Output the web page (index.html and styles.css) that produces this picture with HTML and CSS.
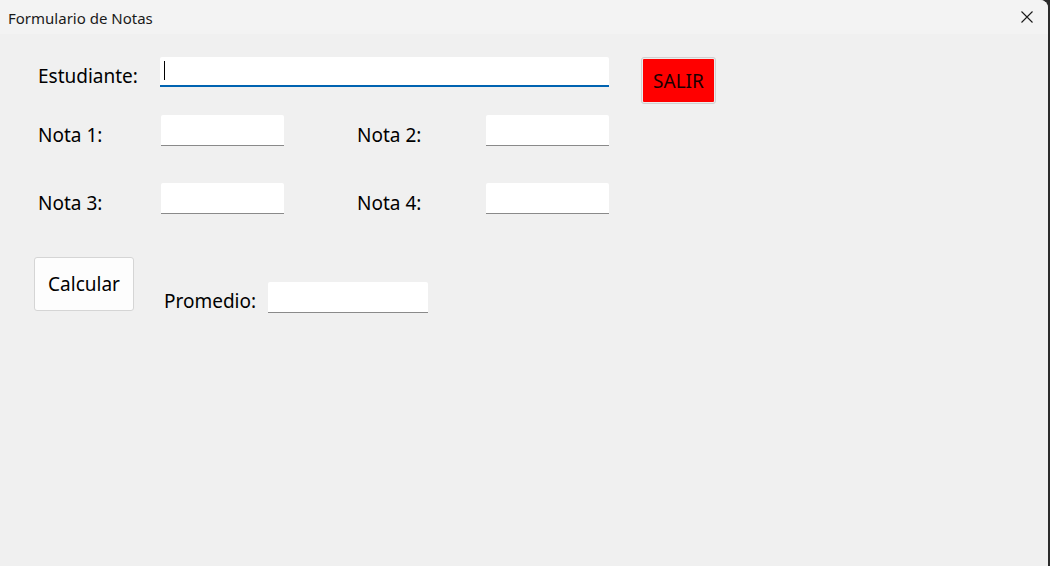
FILE: index.html
```html
<!DOCTYPE html>
<html lang="es">
<head>
<meta charset="utf-8">
<title>Formulario de Notas</title>
<link rel="stylesheet" href="styles.css">
</head>
<body>
<div class="window">
  <div class="titlebar">
    <span class="title">Formulario de Notas</span>
    <svg class="close" width="12" height="12" viewBox="0 0 12 12"><path d="M0.5 0.5 L11.5 11.5 M11.5 0.5 L0.5 11.5" stroke="#1a1a1a" stroke-width="1.1" fill="none"/></svg>
  </div>
  <div class="content">
    <div class="row row-student">
      <label class="lbl lbl-student">Estudiante:</label>
      <div class="field field-student"><span class="caret"></span></div>
      <button class="btn-salir">SALIR</button>
    </div>
    <div class="row row-notes">
      <label class="lbl lbl-nota">Nota 1:</label>
      <div class="field field-small"></div>
      <label class="lbl lbl-nota2">Nota 2:</label>
      <div class="field field-small"></div>
    </div>
    <div class="row row-notes row-notes2">
      <label class="lbl lbl-nota">Nota 3:</label>
      <div class="field field-small"></div>
      <label class="lbl lbl-nota2">Nota 4:</label>
      <div class="field field-small"></div>
    </div>
    <div class="row row-calc">
      <button class="btn-calc">Calcular</button>
      <label class="lbl lbl-prom">Promedio:</label>
      <div class="field field-prom"></div>
    </div>
  </div>
</div>
</body>
</html>
```

FILE: styles.css
```css
* { box-sizing: border-box; }
html, body { margin: 0; padding: 0; }
body {
  width: 1050px;
  height: 566px;
  background: #2b2b2b;
  overflow: hidden;
  font-family: "Noto Sans", "Open Sans", sans-serif;
  color: #000;
}
.window {
  width: 1048px;
  height: 566px;
  background: #f0f0f0;
  border-top-right-radius: 8px;
  overflow: hidden;
}
.titlebar {
  height: 34px;
  background: #f3f3f3;
  display: flex;
  align-items: center;
  justify-content: space-between;
  padding: 0 15px 0 8px;
}
.title {
  font-size: 15px;
  color: #1a1a1a;
  margin-top: 1px;
}
.close { margin-top: 0; }
.content {
  padding-top: 23px;
}
.row {
  display: flex;
  align-items: flex-start;
}
.lbl {
  font-size: 19px;
  line-height: 30px;
  white-space: nowrap;
}
.field {
  background: #fff;
  height: 31px;
  border-bottom: 1px solid #8a8a8a;
  border-radius: 2px 2px 0 0;
}
.row-student { padding-left: 38px; height: 58px; }
.lbl-student { width: 122px; margin-top: 4px; }
.field-student {
  width: 449px;
  height: 30px;
  border-bottom: 2px solid #0063b1;
  position: relative;
}
.caret {
  position: absolute;
  left: 4px;
  top: 4px;
  width: 1px;
  height: 19px;
  background: #000;
}
.btn-salir {
  margin-left: 32px;
  width: 75px;
  height: 47px;
  background: #ff0000;
  border: 2px solid #ececec;
  outline: 1px solid #d0d0d0;
  outline-offset: -1px;
  border-radius: 3px;
  font-family: inherit;
  font-size: 19px;
  color: #1a0000;
  padding: 0;
}
.row-notes { padding-left: 38px; height: 68px; }
.lbl-nota { width: 123px; margin-top: 5px; }
.field-small { width: 123px; }
.lbl-nota2 { width: 129px; margin-left: 73px; margin-top: 5px; }
.row-notes2 { height: 74px; }
.row-calc { padding-left: 34px; }
.btn-calc {
  width: 100px;
  height: 54px;
  background: #fdfdfd;
  border: 1px solid #d5d5d5;
  border-radius: 3px;
  font-family: inherit;
  font-size: 19px;
  color: #000;
  padding: 0;
}
.lbl-prom { margin-left: 30px; width: 104px; margin-top: 29px; }
.field-prom { width: 160px; margin-top: 25px; }
```
